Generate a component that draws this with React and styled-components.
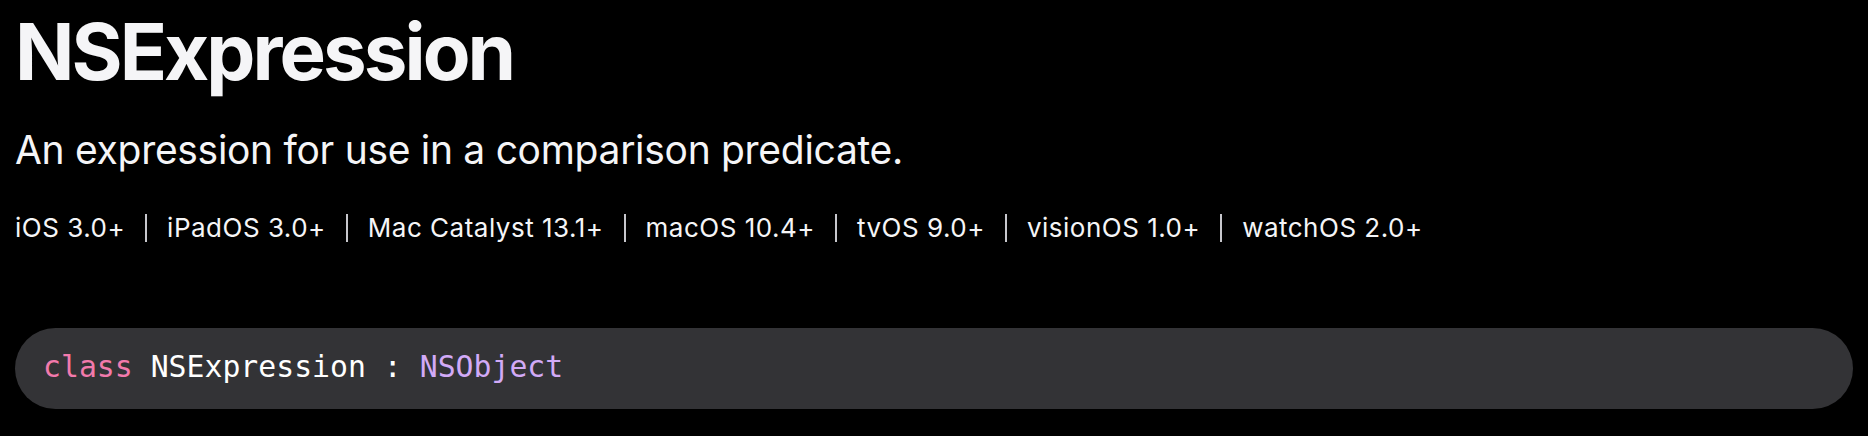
import React from 'react';
import styled, { createGlobalStyle } from 'styled-components';

const GlobalStyle = createGlobalStyle`
    html, body {
        margin: 0;
        padding: 0;
        background: #000;
    }
    body {
        font-family: Inter, "Noto Sans", "Liberation Sans", sans-serif;
        color: #f5f5f7;
    }
`;

const Page = styled.div`
    display: flex;
    flex-direction: column;
    padding: 12px 15px 0 15px;
`;

const Title = styled.h1`
    margin: 0;
    font-size: 78px;
    line-height: 80px;
    font-weight: 700;
    letter-spacing: -2.95px;
    color: #f5f5f7;
`;

const Abstract = styled.p`
    margin: 34px 0 0 0;
    font-size: 39px;
    line-height: 48px;
    font-weight: 400;
    letter-spacing: -0.3px;
    color: #f5f5f7;
`;

const Platforms = styled.ul`
    display: flex;
    align-items: center;
    list-style: none;
    margin: 39px 0 0 0;
    padding: 0;
    font-size: 26px;
    line-height: 30px;
    letter-spacing: 0.5px;
    color: #f5f5f7;
`;

const Platform = styled.li`
    display: flex;
    align-items: center;
    white-space: nowrap;

    & + &::before {
        content: '';
        display: block;
        width: 2px;
        height: 28px;
        margin: 0 20px;
        background: #c7c7cc;
    }
`;

const Declaration = styled.pre`
    margin: 85px 0 0 0;
    padding: 17px 28px 20px 28px;
    background: #333336;
    border-radius: 41px;
    font-family: "DejaVu Sans Mono", "Liberation Mono", monospace;
    font-size: 29.8px;
    line-height: 44px;
    color: #fff;
`;

const Token = styled.span`
    color: ${p => p.kind === 'keyword' ? '#f27aac' : p.kind === 'type' ? '#d2aaf7' : '#fff'};
`;

const platforms = [
    'iOS 3.0+',
    'iPadOS 3.0+',
    'Mac Catalyst 13.1+',
    'macOS 10.4+',
    'tvOS 9.0+',
    'visionOS 1.0+',
    'watchOS 2.0+',
];

export default function App() {
    return (
        <>
            <GlobalStyle/>
            <Page>
                <Title>NSExpression</Title>
                <Abstract>An expression for use in a comparison predicate.</Abstract>
                <Platforms>
                    {platforms.map(name => <Platform key={name}>{name}</Platform>)}
                </Platforms>
                <Declaration>
                    <Token kind="keyword">class</Token> NSExpression : <Token kind="type">NSObject</Token>
                </Declaration>
            </Page>
        </>
    );
}
